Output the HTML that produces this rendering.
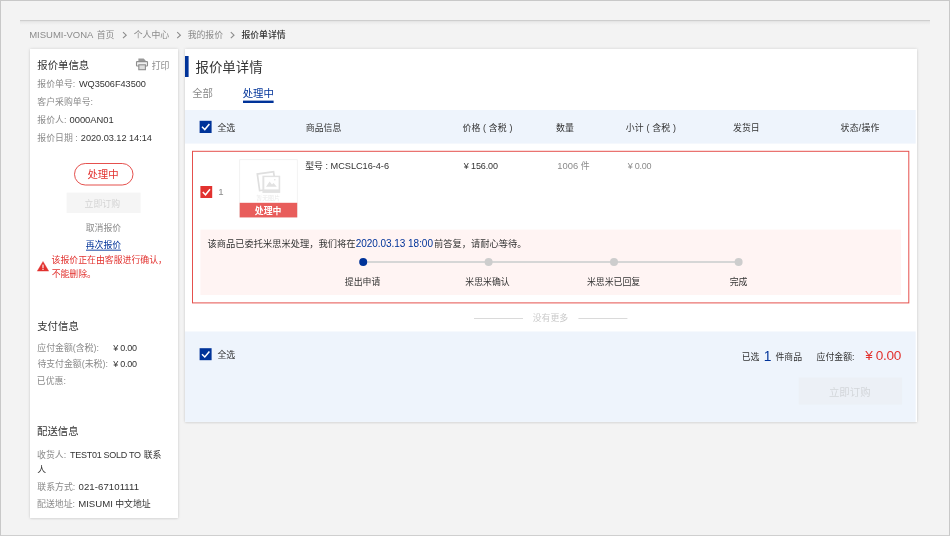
<!DOCTYPE html>
<html lang="zh-CN">
<head>
<meta charset="utf-8">
<title>报价单详情</title>
<style>
*{box-sizing:border-box;margin:0;padding:0}
html,body{width:950px;height:537px;overflow:hidden;background:#fff}
body{font-family:"Liberation Sans","Noto Sans CJK SC",sans-serif;font-size:8.9px;color:#333;position:relative}
.frame{position:absolute;left:0;top:0;width:950px;height:536px;border:1px solid #c8c8c8;border-bottom-color:#cfcfcf;background:#f3f3f3}
.a{position:absolute;white-space:nowrap;line-height:20px}
.topline{position:absolute;left:20px;top:20px;width:910px;height:5px;background:linear-gradient(#cecece 0,#cecece 1px,#e3e3e3 1.2px,#ebebeb 2.5px,#f3f3f3 5px)}
.card{position:absolute;background:#fff;box-shadow:0 0 3px rgba(0,0,0,.14),0 1px 2px rgba(0,0,0,.05)}
svg.bg{position:absolute;left:0;top:0}
</style>
</head>
<body>
<div class="frame"></div>
<div class="topline"></div>
<div class="card" style="left:30px;top:49px;width:148px;height:469px"></div>
<div class="card" style="left:185px;top:49px;width:731.6px;height:373px"></div>

<svg class="bg" width="950" height="537" viewBox="0 0 950 537">
  <!-- breadcrumb chevrons -->
  <g fill="none" stroke="#8b8b8b" stroke-width="1.1">
    <path d="M123 32.2 L126.2 35.2 L123 38.2"/>
    <path d="M177.2 32.2 L180.4 35.2 L177.2 38.2"/>
    <path d="M230.8 32.2 L234 35.2 L230.8 38.2"/>
  </g>
  <!-- printer icon -->
  <g>
    <path d="M138.4 58.4 h5.2 l2 2 v1.2 h-7.2z" fill="#999"/>
    <rect x="136.5" y="61.6" width="11" height="4.4" rx=".6" fill="#f0f0f0" stroke="#8e8e8e" stroke-width="1.1"/>
    <rect x="138.8" y="64.8" width="6.6" height="4.9" fill="#dedede" stroke="#8e8e8e" stroke-width="1.1"/>
  </g>
  <!-- status pill -->
  <rect x="74.5" y="163.5" width="58.5" height="21.5" rx="10.75" fill="#fff" stroke="#e5504d" stroke-width="1"/>
  <!-- disabled btn -->
  <rect x="66.6" y="192.6" width="74" height="20.4" fill="#f5f5f5"/>
  <!-- underline for requote -->
  <rect x="86" y="249.7" width="35" height=".9" fill="#003399"/>
  <!-- warning icon -->
  <path d="M43 261.5 L48.7 271.1 L37.3 271.1 Z" fill="#e2322f" stroke="#e2322f" stroke-width=".4" stroke-linejoin="round"/>
  <rect x="42.45" y="264.6" width="1.1" height="3.6" fill="#fff"/>
  <rect x="42.45" y="268.9" width="1.1" height="1.1" fill="#fff"/>

  <!-- main: title bar -->
  <rect x="185" y="56" width="3.6" height="21" fill="#003399"/>
  <rect x="243" y="100.6" width="30.6" height="2.4" fill="#003399"/>
  <!-- table header band -->
  <rect x="185" y="110" width="730.7" height="33.6" fill="#eef4fc"/>
  <g id="cb1"><rect x="199.6" y="120.8" width="12" height="12.2" fill="#003399"/><path d="M202 126.8 L204.8 129.6 L209.4 124" fill="none" stroke="#fff" stroke-width="1.5"/></g>
  <!-- item box -->
  <rect x="192.5" y="151.3" width="716.3" height="151.6" fill="#fff" stroke="#e5504d" stroke-width="1"/>
  <g id="cb2"><rect x="200.4" y="186" width="11.8" height="12" fill="#e2322f"/><path d="M202.8 192 L205.5 194.8 L210 189.2" fill="none" stroke="#fff" stroke-width="1.5"/></g>
  <!-- image box -->
  <rect x="239.7" y="159.7" width="57.6" height="57.4" fill="#fff" stroke="#efefef" stroke-width=".8"/>
  <g>
    <g transform="rotate(-8 266.4 181.2)"><rect x="258.4" y="172.8" width="16.4" height="16.8" fill="#fff" stroke="#dfdfdf" stroke-width="1.7"/></g>
    <rect x="262.4" y="175.7" width="17.8" height="17.2" fill="#e2e2e2"/>
    <rect x="264.3" y="177.1" width="14.3" height="12.3" fill="#fff"/>
    <path d="M266 186.8 L269.6 181.4 L272 184.6 L273.6 183 L276.8 186.8 Z" fill="#e2e2e2"/>
    <circle cx="274.8" cy="179.7" r=".8" fill="#e2e2e2"/>
  </g>
  <rect x="239.7" y="202.8" width="57.5" height="14.6" fill="#e85d5b"/>
  <!-- pink notice -->
  <rect x="200.4" y="229.6" width="700.6" height="65.4" fill="#fff4f3"/>
  <rect x="363" y="261" width="376" height="2" fill="#d6d6d6"/>
  <circle cx="363.2" cy="262" r="4" fill="#003399"/>
  <circle cx="488.6" cy="262" r="4" fill="#cdcdcd"/>
  <circle cx="614" cy="262" r="4" fill="#cdcdcd"/>
  <circle cx="738.6" cy="262" r="4" fill="#cdcdcd"/>
  <!-- no more -->
  <rect x="474" y="318" width="49" height="1" fill="#dadada"/>
  <rect x="578.4" y="318" width="49" height="1" fill="#dadada"/>
  <!-- footer -->
  <rect x="185" y="331.5" width="730.7" height="90.4" fill="#eef4fc"/>
  <g id="cb3"><rect x="199.6" y="348.2" width="12" height="12" fill="#003399"/><path d="M202 354.2 L204.8 357 L209.4 351.4" fill="none" stroke="#fff" stroke-width="1.5"/></g>
  <rect x="798.7" y="377.5" width="103.4" height="27.1" fill="#ecf0f6"/>
</svg>
<div id="txt" style="position:absolute;left:0;top:0;width:950px;height:537px;will-change:transform">
<div class="a" id="np" style="line-height:1;left:256.3px;top:196.3px;font-size:5.9px;color:#eaeaea">暂无图片</div>
<div class="a" id="bc1" style="left:29.24px;top:24.708px;font-size:9.5px;color:#8b8b8b;letter-spacing:-0.026px">MISUMI-VONA</div>
<div class="a" id="bc2" style="left:96.76px;top:24.916px;font-size:8.9px;color:#8b8b8b">首页</div>
<div class="a" id="bc3" style="left:133.73px;top:24.916px;font-size:8.9px;color:#8b8b8b">个人中心</div>
<div class="a" id="bc4" style="left:187.64px;top:24.916px;font-size:8.9px;color:#8b8b8b">我的报价</div>
<div class="a" id="bc5" style="left:241.38px;top:24.916px;font-size:8.9px;color:#333;font-weight:500">报价单详情</div>
<div class="a" id="h1" style="left:37.29px;top:56.396px;font-size:10.4px;color:#333">报价单信息</div>
<div class="a" id="pr" style="left:151.69px;top:55.916px;font-size:8.9px;color:#8b8b8b">打印</div>
<div class="a" id="r1a" style="left:37.33px;top:73.916px;font-size:8.9px;color:#8b8b8b">报价单号:</div>
<div class="a" id="r1b" style="left:78.9px;top:73.812px;font-size:9.2px;color:#333;letter-spacing:-0.034px">WQ3506F43500</div>
<div class="a" id="r2a" style="left:37.33px;top:91.916px;font-size:8.9px;color:#8b8b8b">客户采购单号:</div>
<div class="a" id="r3a" style="left:37.33px;top:109.916px;font-size:8.9px;color:#8b8b8b">报价人:</div>
<div class="a" id="r3b" style="left:69.57px;top:109.743px;font-size:9.4px;color:#333;letter-spacing:-0.037px">0000AN01</div>
<div class="a" id="r4a" style="left:37.33px;top:127.916px;font-size:8.9px;color:#8b8b8b">报价日期 :</div>
<div class="a" id="r4b" style="left:80.84px;top:127.812px;font-size:9.2px;color:#333;letter-spacing:-0.035px">2020.03.12 14:14</div>
<div class="a" id="pill" style="left:87.49px;top:165.396px;font-size:10.4px;color:#e2322f">处理中</div>
<div class="a" id="dbt" style="left:84.56px;top:193.916px;font-size:8.9px;color:#d4d4d4">立即订购</div>
<div class="a" id="cnl" style="left:85.69px;top:217.916px;font-size:8.9px;color:#8b8b8b">取消报价</div>
<div class="a" id="req" style="left:85.69px;top:234.916px;font-size:8.9px;color:#003399">再次报价</div>
<div class="a" id="w1" style="left:51.6px;top:249.916px;font-size:8.9px;color:#e2322f">该报价正在由客服进行确认，</div>
<div class="a" id="w2" style="left:51.64px;top:263.916px;font-size:8.9px;color:#e2322f">不能删除。</div>
<div class="a" id="h2" style="left:37.24px;top:317.396px;font-size:10.4px;color:#333">支付信息</div>
<div class="a" id="p1a" style="left:37.29px;top:337.916px;font-size:8.9px;color:#8b8b8b">应付金额(含税):</div>
<div class="a" id="p1b" style="left:113.34px;top:337.882px;font-size:9.0px;color:#333;letter-spacing:-0.268px">¥ 0.00</div>
<div class="a" id="p2a" style="left:37.38px;top:353.916px;font-size:8.9px;color:#8b8b8b">待支付金额(未税):</div>
<div class="a" id="p2b" style="left:113.34px;top:353.882px;font-size:9.0px;color:#333;letter-spacing:-0.268px">¥ 0.00</div>
<div class="a" id="p3a" style="left:36.8px;top:370.916px;font-size:8.9px;color:#8b8b8b">已优惠:</div>
<div class="a" id="h3" style="left:37.03px;top:422.396px;font-size:10.4px;color:#333">配送信息</div>
<div class="a" id="s1a" style="left:37.07px;top:444.916px;font-size:8.9px;color:#8b8b8b">收货人:</div>
<div class="a" id="s1b" style="left:70.12px;top:444.882px;font-size:9.0px;color:#333;letter-spacing:-0.296px">TEST01 SOLD TO</div>
<div class="a" id="s1c" style="left:143.69px;top:444.916px;font-size:8.9px;color:#333">联系</div>
<div class="a" id="s1d" style="left:37.24px;top:459.916px;font-size:8.9px;color:#333">人</div>
<div class="a" id="s3a" style="left:37.29px;top:476.916px;font-size:8.9px;color:#8b8b8b">联系方式:</div>
<div class="a" id="s3b" style="left:78.56px;top:476.674px;font-size:9.6px;color:#333;letter-spacing:0.072px">021-67101111</div>
<div class="a" id="s4a" style="left:37.11px;top:493.916px;font-size:8.9px;color:#8b8b8b">配送地址:</div>
<div class="a" id="s4b" style="left:78.13px;top:493.674px;font-size:9.6px;color:#333;letter-spacing:0.029px">MISUMI</div>
<div class="a" id="s4c" style="left:115.15px;top:493.916px;font-size:8.9px;color:#333">中文地址</div>
<div class="a" id="ttl" style="left:195.6px;top:58.357px;font-size:13.4px;color:#333">报价单详情</div>
<div class="a" id="tb1" style="left:192.14px;top:84.396px;font-size:10.4px;color:#8b8b8b">全部</div>
<div class="a" id="tb2" style="left:242.69px;top:84.396px;font-size:10.4px;color:#003399">处理中</div>
<div class="a" id="th0" style="left:217.38px;top:117.916px;font-size:8.9px;color:#333">全选</div>
<div class="a" id="th1" style="left:305.87px;top:117.916px;font-size:8.9px;color:#333">商品信息</div>
<div class="a" id="th2" style="left:462.39px;top:117.916px;font-size:8.9px;color:#333;letter-spacing:0.16px">价格 ( 含税 )</div>
<div class="a" id="th3" style="left:556.09px;top:117.916px;font-size:8.9px;color:#333">数量</div>
<div class="a" id="th4" style="left:625.63px;top:117.916px;font-size:8.9px;color:#333;letter-spacing:0.205px">小计 ( 含税 )</div>
<div class="a" id="th5" style="left:733.08px;top:117.916px;font-size:8.9px;color:#333">发货日</div>
<div class="a" id="th6" style="left:840.53px;top:117.916px;font-size:8.9px;color:#333;letter-spacing:0.251px">状态/操作</div>
<div class="a" id="n1" style="left:218.28px;top:181.674px;font-size:9.6px;color:#8b8b8b">1</div>
<div class="a" id="lbl" style="left:254.82px;top:200.916px;font-size:8.9px;color:#fff;font-weight:700">处理中</div>
<div class="a" id="m1" style="left:305.2px;top:155.916px;font-size:8.9px;color:#333">型号</div>
<div class="a" id="m2" style="left:325.5px;top:155.916px;font-size:8.9px;color:#333">:</div>
<div class="a" id="m3" style="left:330.56px;top:155.812px;font-size:9.2px;color:#333;letter-spacing:-0.028px">MCSLC16-4-6</div>
<div class="a" id="pc" style="left:463.75px;top:155.881px;font-size:9.0px;color:#333;letter-spacing:-0.108px">¥ 156.00</div>
<div class="a" id="q1" style="left:557.29px;top:155.743px;font-size:9.4px;color:#8b8b8b">1006</div>
<div class="a" id="q2" style="left:580.73px;top:155.916px;font-size:8.9px;color:#8b8b8b">件</div>
<div class="a" id="st" style="left:627.74px;top:155.881px;font-size:9.0px;color:#8b8b8b;letter-spacing:-0.228px">¥ 0.00</div>
<div class="a" id="g1" style="left:207.58px;top:233.791px;font-size:9.26px;color:#333">该商品已委托米思米处理，我们将在</div>
<div class="a" id="g2" style="left:355.7px;top:233.535px;font-size:10px;color:#003399;letter-spacing:-0.039px">2020.03.13 18:00</div>
<div class="a" id="g3" style="left:433.94px;top:233.791px;font-size:9.26px;color:#333">前答复，请耐心等待。</div>
<div class="a" id="sp1" style="left:344.78px;top:271.916px;font-size:8.9px;color:#333">提出申请</div>
<div class="a" id="sp2" style="left:465.33px;top:271.916px;font-size:8.9px;color:#333">米思米确认</div>
<div class="a" id="sp3" style="left:586.93px;top:271.916px;font-size:8.9px;color:#333">米思米已回复</div>
<div class="a" id="sp4" style="left:729.64px;top:271.916px;font-size:8.9px;color:#333">完成</div>
<div class="a" id="nm" style="left:532.73px;top:307.916px;font-size:8.9px;color:#c9c9c9">没有更多</div>
<div class="a" id="f0" style="left:217.38px;top:344.916px;font-size:8.9px;color:#333">全选</div>
<div class="a" id="f1" style="left:741.7px;top:346.916px;font-size:8.9px;color:#333">已选</div>
<div class="a" id="f2" style="left:763.76px;top:347.218px;font-size:13.8px;color:#003399">1</div>
<div class="a" id="f3" style="left:775.43px;top:346.916px;font-size:8.9px;color:#333">件商品</div>
<div class="a" id="f4" style="left:816.59px;top:346.916px;font-size:8.9px;color:#333">应付金额:</div>
<div class="a" id="f5" style="left:865.17px;top:346.288px;font-size:13.6px;color:#e2322f;letter-spacing:-0.318px">¥ 0.00</div>
<div class="a" id="fb" style="left:828.98px;top:383.396px;font-size:10.4px;color:#d3d6da">立即订购</div>
</div>
</body>
</html>
